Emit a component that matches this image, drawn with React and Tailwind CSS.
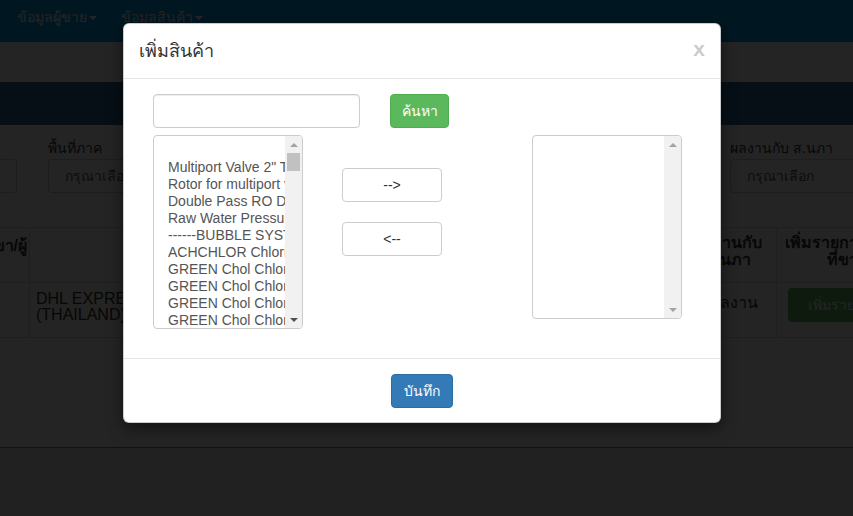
import React from 'react'

const leftItems = [
  '',
  'Multiport Valve 2" Top Mount',
  'Rotor for multiport valve',
  'Double Pass RO Device',
  'Raw Water Pressure Pump',
  '------BUBBLE SYSTEM------',
  'ACHCHLOR Chlorine 90%',
  'GREEN Chol Chlorine 65%',
  'GREEN Chol Chlorine 70%',
  'GREEN Chol Chlorine 90%',
  'GREEN Chol Chlorine Tablet',
  'GREEN Chol Chlorine Powder',
]

const UpArrow = ({ dark }) => (
  <div className={`h-0 w-0 border-x-[4px] border-b-[4px] border-x-transparent ${dark ? 'border-b-[#505050]' : 'border-b-[#a3a3a3]'}`} />
)

const DownArrow = ({ dark }) => (
  <div className={`h-0 w-0 border-x-[4px] border-t-[4px] border-x-transparent ${dark ? 'border-t-[#505050]' : 'border-t-[#a3a3a3]'}`} />
)

const Scrollbar = ({ thumb }) => (
  <div className="flex w-[17px] shrink-0 flex-col items-center bg-[#f1f1f1]">
    <div className="flex h-[17px] w-full items-center justify-center">
      <UpArrow />
    </div>
    {thumb && <div className="h-[18px] w-[13px] bg-[#c1c1c1]" />}
    <div className="flex-1" />
    <div className="flex h-[17px] w-full items-center justify-center">
      <DownArrow dark={thumb} />
    </div>
  </div>
)

const ListBox = ({ items, height, thumb }) => (
  <div className={`flex w-[150px] overflow-hidden rounded-[4px] border border-[#cccccc] bg-white ${height}`}>
    <div className="flex-1 overflow-hidden py-[6px] pl-[14px]">
      {items.map((item, i) => (
        <div key={i} className="h-[17px] whitespace-nowrap text-[14px] leading-[17px] text-[#555555]">
          {item}
        </div>
      ))}
    </div>
    <Scrollbar thumb={thumb} />
  </div>
)

const Caret = () => (
  <span className="ml-[2px] inline-block h-0 w-0 border-x-[4px] border-t-[4px] border-x-transparent border-t-white align-middle" />
)

const BackgroundPage = () => (
  <div className="flex h-full flex-col bg-white">
    {/* navbar */}
    <div className="flex h-[42px] shrink-0 items-center bg-[#06a0ea] px-[17px] pb-[7px] text-[14px] text-white">
      <span>ข้อมูลผู้ขาย<Caret /></span>
      <span className="ml-[24px]">ข้อมูลสินค้า<Caret /></span>
    </div>
    <div className="h-[40px] shrink-0 bg-white" />
    <div className="h-[43px] shrink-0 bg-[#2b6a9c]" />

    {/* filters */}
    <div className="flex h-[102px] shrink-0 pt-[12px] text-[14px] text-[#333333]">
      <div className="flex shrink-0 flex-col">
        <div className="h-[22px]" />
        <div className="h-[34px] w-[17px] rounded-r-[4px] border border-l-0 border-[#cccccc]" />
      </div>
      <div className="ml-[31px] flex w-[200px] shrink-0 flex-col">
        <div className="h-[22px] leading-[22px]">พื้นที่ภาค</div>
        <div className="flex h-[34px] items-center rounded-[4px] border border-[#cccccc] pl-[16px] text-[#555555]">กรุณาเลือก</div>
      </div>
      <div className="ml-[482px] flex w-[200px] shrink-0 flex-col">
        <div className="h-[22px] leading-[22px]">ผลงานกับ ส.นภา</div>
        <div className="flex h-[34px] items-center rounded-[4px] border border-[#cccccc] pl-[16px] text-[#555555]">กรุณาเลือก</div>
      </div>
    </div>

    {/* table */}
    <div className="flex shrink-0 flex-col border-t border-[#dddddd] text-[16px] text-[#333333]">
      <div className="flex h-[55px] border-b border-[#dddddd] font-bold">
        <div className="flex w-[30px] shrink-0 justify-end overflow-hidden whitespace-nowrap border-r border-[#dddddd] pt-[6px] pr-[2px]">ชื่อบริษัทผู้ขา/ผู้</div>
        <div className="w-[650px] shrink-0 pt-[6px] text-center">รายชื่อบริษัท</div>
        <div className="w-[96px] shrink-0 border-l border-[#dddddd] px-[8px] pt-[6px] text-center leading-[17px]">ผลงานกับ ส.นภา</div>
        <div className="w-[140px] shrink-0 border-l border-[#dddddd] px-[8px] pt-[6px] text-center leading-[17px]">เพิ่มรายการสินค้าที่ขาย</div>
      </div>
      <div className="flex h-[55px] border-b border-[#dddddd]">
        <div className="w-[30px] shrink-0 border-r border-[#dddddd]" />
        <div className="w-[650px] shrink-0 pl-[6px] pt-[8px] leading-[16px]">DHL EXPRESS INTERNATIONAL<br />(THAILAND) LTD.</div>
        <div className="w-[96px] shrink-0 border-l border-[#dddddd] pt-[8px] text-center">มีผลงาน</div>
        <div className="w-[140px] shrink-0 border-l border-[#dddddd] pl-[11px] pt-[5px]">
          <div className="flex h-[34px] w-[110px] items-center justify-center rounded-[4px] bg-[#5cb85c] text-[14px] text-white">เพิ่มรายการ</div>
        </div>
      </div>
    </div>
    <div className="flex-1" />
    <div className="h-[69px] shrink-0 border-t border-[#3b8fd0] bg-[#eaeaea]" />
  </div>
)

export default function App() {
  return (
    <div className="relative h-[516px] w-[853px] overflow-hidden font-['Liberation_Sans','Noto_Sans',sans-serif]">
      <BackgroundPage />

      {/* backdrop */}
      <div className="absolute inset-0 bg-black/[0.86]" />

      {/* modal */}
      <div className="absolute left-[123px] top-[23px] w-[598px] rounded-[6px] border border-black/20 bg-white shadow-[0_5px_15px_rgba(0,0,0,0.5)]">
        <div className="flex h-[55px] items-center justify-between border-b border-[#e5e5e5] pl-[15px] pr-[15px]">
          <h4 className="text-[18px] text-[#333333]">เพิ่มสินค้า</h4>
          <button className="mb-[6px] text-[21px] font-bold leading-none text-[#000000] opacity-20">x</button>
        </div>

        <div className="pl-[29px] pt-[15px] pb-[29px]">
          <div className="flex">
            <input type="text" className="h-[34px] w-[207px] rounded-[4px] border border-[#cccccc] px-[12px] text-[14px] shadow-[inset_0_1px_1px_rgba(0,0,0,0.075)] outline-none" />
            <button className="ml-[30px] h-[34px] w-[59px] rounded-[4px] border border-[#4cae4c] bg-[#5cb85c] text-[14px] text-white">ค้นหา</button>
          </div>
          <div className="mt-[7px] flex items-start">
            <ListBox items={leftItems} height="h-[194px]" thumb />
            <div className="ml-[39px] flex w-[100px] flex-col pt-[33px]">
              <button className="h-[34px] rounded-[4px] border border-[#cccccc] bg-white text-[14px] text-[#333333]">--&gt;</button>
              <button className="mt-[20px] h-[34px] rounded-[4px] border border-[#cccccc] bg-white text-[14px] text-[#333333]">&lt;--</button>
            </div>
            <div className="ml-[90px]">
              <ListBox items={[]} height="h-[184px]" />
            </div>
          </div>
        </div>

        <div className="flex justify-center border-t border-[#e5e5e5] pt-[15px] pb-[14px]">
          <button className="h-[34px] w-[62px] rounded-[4px] border border-[#2e6da4] bg-[#337ab7] text-[14px] text-white">บันทึก</button>
        </div>
      </div>
    </div>
  )
}
